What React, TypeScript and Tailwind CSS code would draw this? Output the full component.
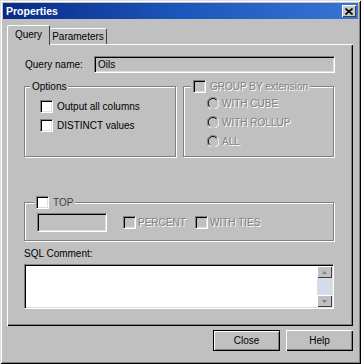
import React from "react";

const sunken =
  "box-border border border-t-[#808080] border-l-[#808080] border-b-white border-r-white shadow-[inset_1px_1px_0_#000,inset_-1px_-1px_0_#dfdfdf]";
const disabledText = "text-[#808080] [text-shadow:1px_1px_0_#fff]";

function Check({ disabled = false }: { disabled?: boolean }) {
  return (
    <span
      className={`${sunken} block w-[13px] h-[13px] shrink-0 ${disabled ? "bg-[#c0c0c0]" : "bg-white"}`}
    />
  );
}

function Radio() {
  return (
    <svg width="12" height="12" viewBox="0 0 12 12" className="shrink-0">
      <path d="M10.5 2.5 A5.5 5.5 0 0 0 1.5 10.5" fill="none" stroke="#808080" strokeWidth="1" />
      <path d="M9.5 3 A4.5 4.5 0 0 0 2.5 9.5" fill="none" stroke="#000" strokeWidth="1" />
      <path d="M1.5 10.5 A5.5 5.5 0 0 0 10.5 2.5" fill="none" stroke="#fff" strokeWidth="1" />
      <circle cx="6" cy="6" r="3.6" fill="#c0c0c0" />
    </svg>
  );
}

function Group({
  className,
  legend,
  legendPos,
  children,
}: {
  className: string;
  legend: React.ReactNode;
  legendPos: string;
  children: React.ReactNode;
}) {
  return (
    <div
      className={`relative box-border border border-[#808080] shadow-[inset_1px_1px_0_#fff,1px_1px_0_#fff] ${className}`}
    >
      <div
        className={`absolute -top-[7px] ${legendPos} px-[2px] bg-[#c0c0c0] h-[13px] leading-[13px] flex items-center gap-[4px]`}
      >
        {legend}
      </div>
      {children}
    </div>
  );
}

export default function App() {
  return (
    <div className="w-[361px] h-[364px] box-border bg-[#c0c0c0] p-[3px] flex flex-col overflow-hidden shadow-[inset_1px_1px_0_#dfdfdf,inset_-1px_-1px_0_#000,inset_2px_2px_0_#fff,inset_-2px_-2px_0_#808080] font-['Liberation_Sans',Arial,sans-serif] text-[10px] text-black">
      {/* Title bar */}
      <div className="h-[16px] flex items-center justify-between pl-[3px] pr-[2px] bg-linear-to-r from-[#0a2a88] via-[#1c56bc] to-[#3874d4]">
        <span className="text-white font-bold text-[10.5px] leading-[14px]">Properties</span>
        <span className="w-[14px] h-[12px] box-border bg-[#c8c8c8] shadow-[inset_1px_1px_0_#fff,inset_-1px_-1px_0_#404040] flex items-center justify-center">
          <svg width="8" height="7" viewBox="0 0 8 7">
            <path d="M0.5 0.5 L7.5 6.5 M7.5 0.5 L0.5 6.5" stroke="#000" strokeWidth="1.6" />
          </svg>
        </span>
      </div>

      <div className="px-[4px] flex flex-col">
        {/* Tabs */}
        <div className="mt-[6px] flex items-end">
          <div className="relative z-10 -mb-px h-[20px] w-[43px] box-border bg-[#c0c0c0] border-t border-l border-white border-r border-r-[#404040] rounded-t-[2px] flex items-center justify-center pb-[2px]">
            Query
          </div>
          <div className="h-[16px] w-[57px] box-border border-t border-white border-r border-r-[#404040] rounded-t-[2px] flex items-center justify-center">
            Parameters
          </div>
        </div>

        {/* Panel */}
        <div className="w-[346px] h-[282px] box-border pl-[17px] pt-[12px] flex flex-col shadow-[inset_1px_1px_0_#fff,inset_-1px_-1px_0_#000,inset_-2px_-2px_0_#808080]">
          <div className="flex items-center h-[17px]">
            <span className="w-[70px] pl-px">Query name:</span>
            <div className={`${sunken} w-[241px] h-[17px] bg-[#c0c0c0] flex items-center pl-[3px]`}>Oils</div>
          </div>

          <div className="mt-[13px] flex gap-[7px]">
            <Group
              className="w-[152px] h-[71px]"
              legendPos="left-[5px]"
              legend={<span>Options</span>}
            >
              <div className="pt-[13px] pl-[15px] flex flex-col gap-[6px]">
                <div className="flex items-center gap-[4px] h-[13px]">
                  <Check />
                  <span>Output all columns</span>
                </div>
                <div className="flex items-center gap-[4px] h-[13px]">
                  <Check />
                  <span>DISTINCT values</span>
                </div>
              </div>
            </Group>
            <Group
              className="w-[151px] h-[71px]"
              legendPos="left-[7px]"
              legend={
                <>
                  <Check disabled />
                  <span className={disabledText}>GROUP BY extension</span>
                </>
              }
            >
              <div className="pt-[10px] pl-[23px] flex flex-col gap-[7px]">
                {["WITH CUBE", "WITH ROLLUP", "ALL"].map((t) => (
                  <div key={t} className="flex items-center gap-[3px] h-[12px]">
                    <Radio />
                    <span className={disabledText}>{t}</span>
                  </div>
                ))}
              </div>
            </Group>
          </div>

          <Group
            className="mt-[45px] w-[310px] h-[39px]"
            legendPos="left-[9px]"
            legend={
              <>
                <Check />
                <span className="text-[#404040]">TOP</span>
              </>
            }
          >
            <div className="pt-[10px] pl-[12px] flex items-center">
              <div className={`${sunken} w-[70px] h-[19px] bg-[#c0c0c0]`} />
              <div className="ml-[16px] w-[72px] flex items-center gap-[2px]">
                <Check disabled />
                <span className={disabledText}>PERCENT</span>
              </div>
              <div className="flex items-center gap-[2px]">
                <Check disabled />
                <span className={disabledText}>WITH TIES</span>
              </div>
            </div>
          </Group>

          <div className="mt-[6px] h-[13px] leading-[13px]">SQL Comment:</div>
          <div className={`${sunken} mt-[4px] w-[310px] h-[45px] bg-white p-px flex justify-end`}>
            <div className="w-[15px] h-full flex flex-col">
              <div className="h-[12px] box-border bg-[#c0c0c0] shadow-[inset_1px_1px_0_#fff,inset_-1px_-1px_0_#404040] flex items-center justify-center">
                <svg width="5" height="3" viewBox="0 0 5 3">
                  <path d="M2.5 0 L5 3 L0 3 Z" fill="#808080" />
                </svg>
              </div>
              <div className="flex-1 bg-[#d4dcec]" />
              <div className="h-[12px] box-border bg-[#c0c0c0] shadow-[inset_1px_1px_0_#fff,inset_-1px_-1px_0_#404040] flex items-center justify-center">
                <svg width="5" height="3" viewBox="0 0 5 3">
                  <path d="M0 0 L5 0 L2.5 3 Z" fill="#808080" />
                </svg>
              </div>
            </div>
          </div>
        </div>

        {/* Buttons */}
        <div className="mt-[4px] w-[346px] flex justify-end gap-[6px]">
          <div className="w-[67px] h-[21px] box-border border border-black shadow-[inset_1px_1px_0_#fff,inset_-1px_-1px_0_#808080] flex items-center justify-center">
            Close
          </div>
          <div className="w-[67px] h-[21px] box-border shadow-[inset_1px_1px_0_#fff,inset_-1px_-1px_0_#000,inset_-2px_-2px_0_#808080] flex items-center justify-center">
            Help
          </div>
        </div>
      </div>
    </div>
  );
}
